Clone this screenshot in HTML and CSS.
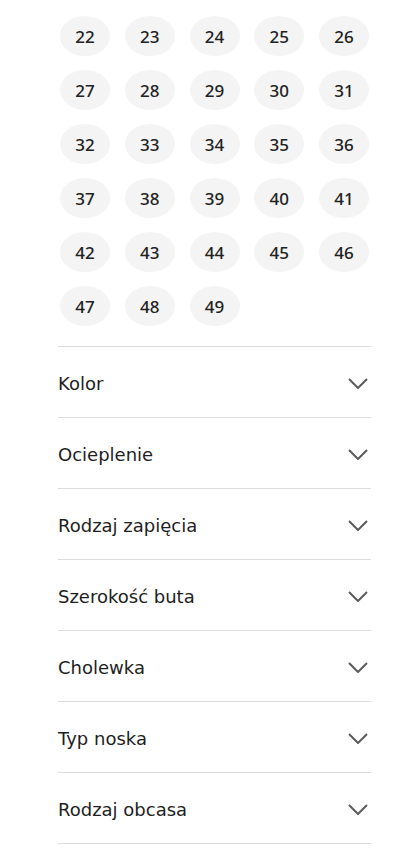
FILE: index.html
```html
<!DOCTYPE html>
<html lang="pl">
<head>
<meta charset="utf-8">
<link rel="stylesheet" href="styles.css">
</head>
<body>
<div class="filters">
  <div class="sizes">
    <button class="chip">22</button><button class="chip">23</button><button class="chip">24</button><button class="chip">25</button><button class="chip">26</button>
    <button class="chip">27</button><button class="chip">28</button><button class="chip">29</button><button class="chip">30</button><button class="chip">31</button>
    <button class="chip">32</button><button class="chip">33</button><button class="chip">34</button><button class="chip">35</button><button class="chip">36</button>
    <button class="chip">37</button><button class="chip">38</button><button class="chip">39</button><button class="chip">40</button><button class="chip">41</button>
    <button class="chip">42</button><button class="chip">43</button><button class="chip">44</button><button class="chip">45</button><button class="chip">46</button>
    <button class="chip">47</button><button class="chip">48</button><button class="chip">49</button>
  </div>
  <div class="sections">
    <div class="section"><span class="label">Kolor</span><svg class="chev" viewBox="0 0 20 11"><path d="M1 1l9 9 9-9"/></svg></div>
    <div class="section"><span class="label">Ocieplenie</span><svg class="chev" viewBox="0 0 20 11"><path d="M1 1l9 9 9-9"/></svg></div>
    <div class="section"><span class="label">Rodzaj zapięcia</span><svg class="chev" viewBox="0 0 20 11"><path d="M1 1l9 9 9-9"/></svg></div>
    <div class="section"><span class="label">Szerokość buta</span><svg class="chev" viewBox="0 0 20 11"><path d="M1 1l9 9 9-9"/></svg></div>
    <div class="section"><span class="label">Cholewka</span><svg class="chev" viewBox="0 0 20 11"><path d="M1 1l9 9 9-9"/></svg></div>
    <div class="section"><span class="label">Typ noska</span><svg class="chev" viewBox="0 0 20 11"><path d="M1 1l9 9 9-9"/></svg></div>
    <div class="section"><span class="label">Rodzaj obcasa</span><svg class="chev" viewBox="0 0 20 11"><path d="M1 1l9 9 9-9"/></svg></div>
  </div>
</div>
</body>
</html>
```
FILE: styles.css
```css
html, body {
  margin: 0;
  padding: 0;
  background: #fff;
}
body {
  font-family: "DejaVu Sans", "Noto Sans", sans-serif;
  color: #1e1e1e;
}
.filters {
  padding: 16px 29px 0 58px;
}
.sizes {
  display: grid;
  grid-template-columns: repeat(5, 50px);
  column-gap: 14.75px;
  row-gap: 14px;
  padding-left: 2px;
}
.chip {
  width: 50px;
  height: 40px;
  border: 0;
  border-radius: 50%;
  background: #f4f4f4;
  font-family: "Noto Sans", "DejaVu Sans", sans-serif;
  font-size: 17px;
  font-weight: 500;
  color: #222;
  padding: 0;
}
.sections {
  margin-top: 20px;
  border-top: 1px solid #dcdcdc;
}
.section {
  height: 70px;
  border-bottom: 1px solid #dcdcdc;
  display: flex;
  align-items: center;
  justify-content: space-between;
}
.label {
  font-size: 18px;
  color: #1e1e1e;
  margin-top: 2px;
}
.chev {
  width: 20px;
  height: 11px;
  margin-right: 3px;
  margin-top: 2px;
  fill: none;
  stroke: #5a5a5a;
  stroke-width: 2;
}
```
